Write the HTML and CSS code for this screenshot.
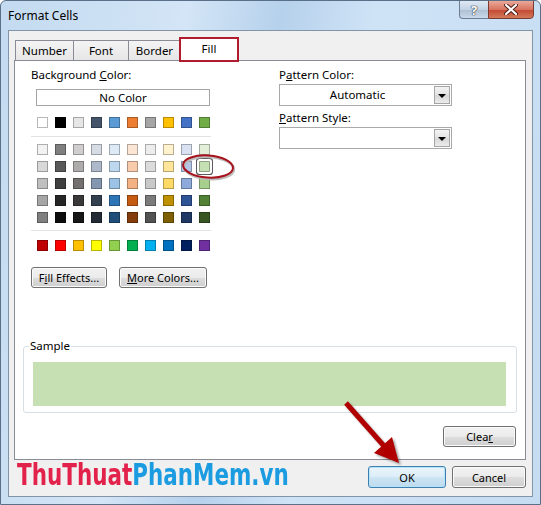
FILE: index.html
```html
<!DOCTYPE html>
<html lang="en">

<head>
    <meta charset="UTF-8">
    <meta name="viewport" content="width=device-width, initial-scale=1.0">
    <title>Format Cells</title>
    <link rel="stylesheet" href="styles.css">
</head>

<body>
    <div class="win">
        <div class="titlebar">
            <span class="title">Format Cells</span>
            <div class="caption">
                <span class="cb help">?</span>
                <span class="cb close">
                    <svg width="14" height="11" viewBox="0 0 14 11">
                        <path d="M2 1 L12 10 M12 1 L2 10" stroke="#4a1a14" stroke-width="4" stroke-linecap="round" />
                        <path d="M2 1 L12 10 M12 1 L2 10" stroke="#fff" stroke-width="2.2" stroke-linecap="round" />
                    </svg>
                </span>
            </div>
        </div>

        <div class="client">
            <div class="tabs">
                <span class="tab">Number</span>
                <span class="tab">Font</span>
                <span class="tab">Border</span>
                <span class="tab on">Fill</span>
            </div>

            <div class="panel">
                <div class="cols">
                    <div class="left">
                        <div class="lbl">Background <u>C</u>olor:</div>
                        <div class="nocolor">No Color</div>

                        <div class="swatches">
                            <i style="background:#ffffff"></i><i style="background:#000000"></i><i style="background:#e7e6e6"></i><i style="background:#44546a"></i><i style="background:#5b9bd5"></i><i style="background:#ed7d31"></i><i style="background:#a5a5a5"></i><i style="background:#ffc000"></i><i style="background:#4472c4"></i><i style="background:#70ad47"></i>
                        </div>
                        <div class="sep"></div>
                        <div class="swatches tints">
                            <i style="background:#f2f2f2"></i><i style="background:#7f7f7f"></i><i style="background:#d0cece"></i><i style="background:#d6dce4"></i><i style="background:#deebf6"></i><i style="background:#fbe5d5"></i><i style="background:#ededed"></i><i style="background:#fff2cc"></i><i style="background:#d9e2f3"></i><i style="background:#e2efd9"></i>
                            <i style="background:#d8d8d8"></i><i style="background:#595959"></i><i style="background:#aeabab"></i><i style="background:#adb9ca"></i><i style="background:#bdd7ee"></i><i style="background:#f7cbac"></i><i style="background:#dbdbdb"></i><i style="background:#fee599"></i><i style="background:#b4c6e7"></i><i class="sel" style="background:#c5e0b3"></i>
                            <i style="background:#bfbfbf"></i><i style="background:#3f3f3f"></i><i style="background:#757070"></i><i style="background:#8496b0"></i><i style="background:#9cc3e5"></i><i style="background:#f4b183"></i><i style="background:#c9c9c9"></i><i style="background:#ffd965"></i><i style="background:#8eaadb"></i><i style="background:#a8d08d"></i>
                            <i style="background:#a5a5a5"></i><i style="background:#262626"></i><i style="background:#3a3838"></i><i style="background:#323f4f"></i><i style="background:#2e75b5"></i><i style="background:#c55a11"></i><i style="background:#7b7b7b"></i><i style="background:#bf9000"></i><i style="background:#2f5496"></i><i style="background:#538135"></i>
                            <i style="background:#7f7f7f"></i><i style="background:#0c0c0c"></i><i style="background:#171616"></i><i style="background:#222a35"></i><i style="background:#1e4e79"></i><i style="background:#833c0b"></i><i style="background:#525252"></i><i style="background:#7f6000"></i><i style="background:#1f3864"></i><i style="background:#375623"></i>
                        </div>
                        <div class="sep sep2"></div>
                        <div class="swatches std">
                            <i style="background:#c00000"></i><i style="background:#ff0000"></i><i style="background:#ffc000"></i><i style="background:#ffff00"></i><i style="background:#92d050"></i><i style="background:#00b050"></i><i style="background:#00b0f0"></i><i style="background:#0070c0"></i><i style="background:#002060"></i><i style="background:#7030a0"></i>
                        </div>

                        <div class="btnrow">
                            <button class="btn fx">F<u>i</u>ll Effects...</button>
                            <button class="btn more"><u>M</u>ore Colors...</button>
                        </div>
                    </div>

                    <div class="right">
                        <div class="lbl">P<u>a</u>ttern Color:</div>
                        <div class="combo">
                            <span class="val">Automatic</span>
                            <span class="drop"><b></b></span>
                        </div>
                        <div class="lbl lbl2"><u>P</u>attern Style:</div>
                        <div class="combo">
                            <span class="val"></span>
                            <span class="drop"><b></b></span>
                        </div>
                    </div>
                </div>

                <fieldset class="sample">
                    <legend>Sample</legend>
                    <div class="fillbox"></div>
                </fieldset>

                <div class="clearrow">
                    <button class="btn clear">Clea<u>r</u></button>
                </div>
            </div>

            <div class="footer">
                <button class="btn ok">OK</button>
                <button class="btn cancel">Cancel</button>
            </div>
        </div>

        <!-- marks drawn over the screenshot -->
        <svg class="marks" width="541" height="505" viewBox="0 0 541 505">
            <ellipse cx="209" cy="168" rx="25" ry="11" fill="none" stroke="#bbb" stroke-width="2.5" transform="rotate(4 209 168)" />
            <ellipse cx="208" cy="166.5" rx="25" ry="11" fill="none" stroke="#a8121c" stroke-width="2" transform="rotate(4 208 166.5)" />
            <g class="arrow">
                <line x1="346" y1="403" x2="384" y2="446" stroke="#b00000" stroke-width="5" />
                <polygon points="399,463 374,453 392,437" fill="#b00000" />
            </g>
        </svg>

        <div class="brand"><span class="r">ThuThuat</span><span class="b">PhanMem.vn</span></div>
    </div>
</body>

</html>
```

FILE: styles.css
```css
* {
    margin: 0;
    padding: 0;
    box-sizing: border-box;
}

body {
    font-family: "Noto Sans", "Open Sans", sans-serif;
    font-size: 11px;
    color: #000;
    background: #fff;
}

u {
    text-decoration: underline;
    text-underline-offset: 1px;
}

button {
    font-family: inherit;
    font-size: 11px;
    color: #000;
}

.win {
    position: relative;
    width: 541px;
    height: 505px;
    border: 1px solid #5a6f88;
    border-radius: 6px 6px 0 0;
    background: linear-gradient(100deg, #c3daf0 0%, #d3e5f6 30%, #b6d1ec 45%, #cfe3f6 60%, #c5dcf1 100%);
    overflow: hidden;
}

.titlebar {
    height: 29px;
    display: flex;
    align-items: flex-start;
    justify-content: space-between;
}

.title {
    font-size: 12px;
    line-height: 14px;
    margin: 8px 0 0 7px;
}

.caption {
    display: flex;
    margin-right: 6px;
    margin-top: -1px;
}

.cb {
    height: 19px;
    display: flex;
    align-items: center;
    justify-content: center;
    border: 1px solid #6b7f96;
}

.help {
    width: 29px;
    border-radius: 0 0 0 4px;
    border-right: none;
    background: linear-gradient(#dfe9f4, #c3d3e5 50%, #aebfd4 51%, #c9d8e9);
    color: #fff;
    font-weight: bold;
    font-size: 13px;
    text-shadow: 0 0 1px #333, 0 0 1px #333, 0 0 1px #333;
}

.close {
    width: 46px;
    border-radius: 0 0 4px 0;
    border-color: #7b3a33;
    background: linear-gradient(#e9a99a, #d8745f 50%, #c44631 51%, #d27a5a);
}

.client {
    margin: 0 7px 0 7px;
    height: 467px;
    border: 1px solid #8394a8;
    background: #f0f0f0;
}

.tabs {
    height: 29px;
    display: flex;
    align-items: flex-end;
    padding-left: 6px;
    position: relative;
    z-index: 1;
}

.tab {
    height: 20px;
    line-height: 19px;
    text-align: center;
    border: 1px solid #898c95;
    border-bottom: none;
    margin-right: -1px;
    background: linear-gradient(#f4f4f4, #e6e6e6);
    font-size: 11.5px;
}

.tab:nth-child(1) {
    width: 59px;
}

.tab:nth-child(2) {
    width: 56px;
}

.tab:nth-child(3) {
    width: 53px;
}

.tab.on {
    width: 58px;
    height: 23px;
    margin-bottom: -1px;
    line-height: 20px;
    background: #fff;
    outline: 2px solid #b01c2e;
    outline-offset: -1px;
}

.panel {
    margin-left: 5px;
    width: 512px;
    height: 400px;
    border: 1px solid #898c95;
    background: #fff;
}

.cols {
    display: flex;
    padding-left: 16px;
}

.left {
    width: 248px;
}

.right {
    width: 173px;
}

.lbl {
    margin-top: 7px;
    line-height: 14px;
    font-size: 11.5px;
}

.lbl2 {
    margin-top: 5px;
}

.nocolor {
    margin: 7px 0 0 5px;
    width: 174px;
    height: 17px;
    line-height: 15px;
    border: 1px solid #a5a5a5;
    text-align: center;
    font-size: 11.5px;
}

.swatches {
    display: grid;
    grid-template-columns: repeat(10, 11px);
    column-gap: 7px;
    row-gap: 6px;
    margin: 11px 0 0 6px;
}

.swatches i {
    display: block;
    width: 11px;
    height: 11px;
    border: 1px solid rgba(0, 0, 0, 0.28);
}

.swatches i.sel {
    box-shadow: 0 0 0 2px #fff, 0 0 0 3px #5a5a5a;
    border-radius: 1px;
}

.tints {
    margin-top: 7px;
}

.std {
    margin-top: 9px;
}

.sep {
    margin-top: 8px;
    width: 180px;
    height: 1px;
    background: #e2e2e2;
}

.sep2 {
    margin-top: 7px;
}

.btnrow {
    display: flex;
    gap: 12px;
    margin-top: 16px;
}

.btn {
    height: 21px;
    border: 1px solid #707070;
    border-radius: 3px;
    background: linear-gradient(#f2f2f2 0%, #ebebeb 50%, #dddddd 51%, #cfcfcf 100%);
    box-shadow: inset 0 0 0 1px #fbfbfb;
}

.fx {
    width: 76px;
}

.more {
    width: 88px;
}

.combo {
    margin-top: 2px;
    height: 22px;
    border: 1px solid #a9a9a9;
    display: flex;
    align-items: stretch;
    padding: 1px;
}

.combo .val {
    flex: 1;
    text-align: center;
    line-height: 18px;
    font-size: 11.5px;
}

.combo .drop {
    width: 16px;
    border: 1px solid #a5a5a5;
    background: linear-gradient(#f3f3f3, #e3e3e3 50%, #d6d6d6 51%, #ececec);
    display: flex;
    align-items: center;
    justify-content: center;
}

.combo .drop b {
    width: 0;
    height: 0;
    border-left: 4px solid transparent;
    border-right: 4px solid transparent;
    border-top: 4px solid #000;
    margin-top: 1px;
}

.sample {
    margin: 51px 0 0 8px;
    width: 494px;
    border: 1px solid #d5dfe5;
    border-radius: 3px;
    padding: 0 10px 6px 9px;
}

.sample legend {
    margin-left: -4px;
    padding: 0 1px;
    line-height: 14px;
    font-size: 11.5px;
}

.fillbox {
    margin-top: 9px;
    height: 44px;
    background: #c6e0b4;
}

.clearrow {
    display: flex;
    justify-content: flex-end;
    padding-right: 9px;
    margin-top: 13px;
}

.clear {
    width: 73px;
}

.footer {
    display: flex;
    justify-content: flex-end;
    gap: 6px;
    padding-right: 6px;
    margin-top: 6px;
}

.ok {
    width: 78px;
    height: 22px;
    border-color: #3c7fb1;
    background: linear-gradient(#eaf5fc 0%, #dcedf8 50%, #cde4f3 51%, #bcdbef 100%);
    box-shadow: inset 0 0 0 1px #b9e3f9;
}

.cancel {
    width: 74px;
    height: 22px;
}

.marks {
    position: absolute;
    left: -1px;
    top: -1px;
    pointer-events: none;
}

.arrow {
    filter: drop-shadow(2px 2px 1px rgba(0, 0, 0, 0.35));
}

.brand {
    position: absolute;
    left: 16px;
    top: 456px;
    font-family: "Liberation Sans Narrow", "DejaVu Sans Condensed", sans-serif;
    font-weight: bold;
    font-size: 31px;
    line-height: 34px;
    white-space: nowrap;
    transform: scaleX(0.77);
    transform-origin: left center;
}

.brand .r {
    color: #e2224a;
}

.brand .b {
    color: #1b9be0;
}
```
